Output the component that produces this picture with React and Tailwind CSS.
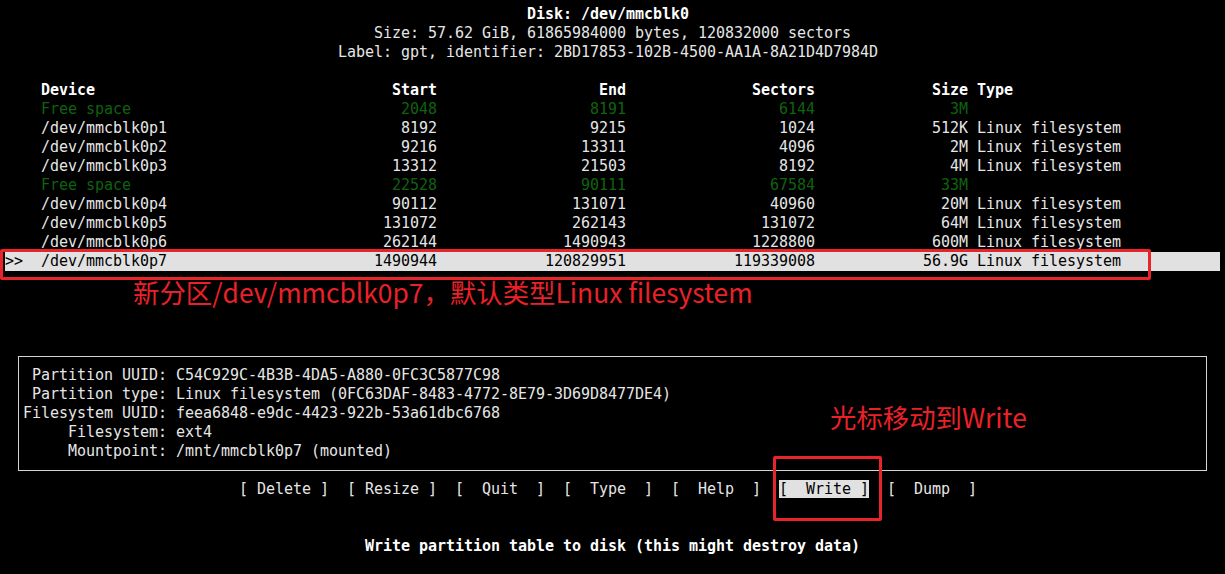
const rows = [
  { dev: 'Free space', start: '2048', end: '8191', sectors: '6144', size: '3M', type: '', free: true },
  { dev: '/dev/mmcblk0p1', start: '8192', end: '9215', sectors: '1024', size: '512K', type: 'Linux filesystem' },
  { dev: '/dev/mmcblk0p2', start: '9216', end: '13311', sectors: '4096', size: '2M', type: 'Linux filesystem' },
  { dev: '/dev/mmcblk0p3', start: '13312', end: '21503', sectors: '8192', size: '4M', type: 'Linux filesystem' },
  { dev: 'Free space', start: '22528', end: '90111', sectors: '67584', size: '33M', type: '', free: true },
  { dev: '/dev/mmcblk0p4', start: '90112', end: '131071', sectors: '40960', size: '20M', type: 'Linux filesystem' },
  { dev: '/dev/mmcblk0p5', start: '131072', end: '262143', sectors: '131072', size: '64M', type: 'Linux filesystem' },
  { dev: '/dev/mmcblk0p6', start: '262144', end: '1490943', sectors: '1228800', size: '600M', type: 'Linux filesystem' },
  { dev: '/dev/mmcblk0p7', start: '1490944', end: '120829951', sectors: '119339008', size: '56.9G', type: 'Linux filesystem', sel: true },
];

const info = [
  ['Partition UUID:', 'C54C929C-4B3B-4DA5-A880-0FC3C5877C98'],
  ['Partition type:', 'Linux filesystem (0FC63DAF-8483-4772-8E79-3D69D8477DE4)'],
  ['Filesystem UUID:', 'feea6848-e9dc-4423-922b-53a61dbc6768'],
  ['Filesystem:', 'ext4'],
  ['Mountpoint:', '/mnt/mmcblk0p7 (mounted)'],
];

const fmt = (pre, dev, s, e, sec, size, type) =>
  pre + dev.padEnd(14) + s.padStart(30) + e.padStart(21) + sec.padStart(21) + size.padStart(17) + ' ' + type;

function Line({ children, className = '' }) {
  return <div className={`h-[19px] leading-[19px] whitespace-pre ${className}`}>{children}</div>;
}

export default function App() {
  return (
    <div
      className="relative w-[1225px] h-[574px] overflow-hidden bg-black pt-[5px] pl-[5px] text-[15px] tracking-[-0.03px] text-[#e6e6e6]"
      style={{ fontFamily: '"DejaVu Sans Mono", "Liberation Mono", monospace' }}
    >
      <Line className="font-bold text-white">{' '.repeat(58) + 'Disk: /dev/mmcblk0'}</Line>
      <Line>{' '.repeat(41) + 'Size: 57.62 GiB, 61865984000 bytes, 120832000 sectors'}</Line>
      <Line>{' '.repeat(37) + 'Label: gpt, identifier: 2BD17853-102B-4500-AA1A-8A21D4D7984D'}</Line>
      <Line> </Line>
      <Line className="font-bold text-white">{fmt('    ', 'Device', 'Start', 'End', 'Sectors', 'Size', 'Type')}</Line>
      {rows.map((r, i) => (
        <Line
          key={i}
          className={r.sel ? 'w-[1215px] bg-[#e1e1e1] text-black' : r.free ? 'text-[#0f630f]' : ''}
        >
          {fmt(r.sel ? '>>  ' : '    ', r.dev, r.start, r.end, r.sectors, r.size, r.type)}
        </Line>
      ))}
      <Line> </Line>
      <Line> </Line>
      <Line> </Line>
      <Line> </Line>

      <div className="ml-[13px] mt-[9px] mb-[9px] h-[115px] w-[1189px] border border-[#d4d4d4] pt-[9px] pl-[4px]">
        {info.map(([k, v]) => (
          <Line key={k}>{k.padStart(16) + ' ' + v}</Line>
        ))}
      </div>

      <Line>
        {' '.repeat(26) + '[ Delete ]  [ Resize ]  [  Quit  ]  [  Type  ]  [  Help  ]  '}
        <span className="bg-[#e1e1e1] text-black">[  Write ]</span>
        {'  [  Dump  ]'}
      </Line>
      <Line> </Line>
      <Line> </Line>
      <Line className="font-bold text-white">{' '.repeat(40) + 'Write partition table to disk (this might destroy data)'}</Line>

      <div className="absolute left-0 top-[249px] h-[31px] w-[1151px] rounded-[2px] border-[3px] border-[#e8232a]" />
      <div className="absolute left-[773px] top-[456px] h-[65px] w-[109px] rounded-[2px] border-[3px] border-[#e8232a]" />
      <div
        className="absolute left-[133px] top-[274px] text-[26.4px] leading-[36px] tracking-normal text-[#ea2128] whitespace-nowrap"
        style={{ fontFamily: '"Noto Sans CJK SC", "Noto Sans", sans-serif' }}
      >
        新分区/dev/mmcblk0p7，默认类型Linux filesystem
      </div>
      <div
        className="absolute left-[830px] top-[399px] text-[26.4px] leading-[36px] tracking-normal text-[#ea2128] whitespace-nowrap"
        style={{ fontFamily: '"Noto Sans CJK SC", "Noto Sans", sans-serif' }}
      >
        光标移动到Write
      </div>
    </div>
  );
}
